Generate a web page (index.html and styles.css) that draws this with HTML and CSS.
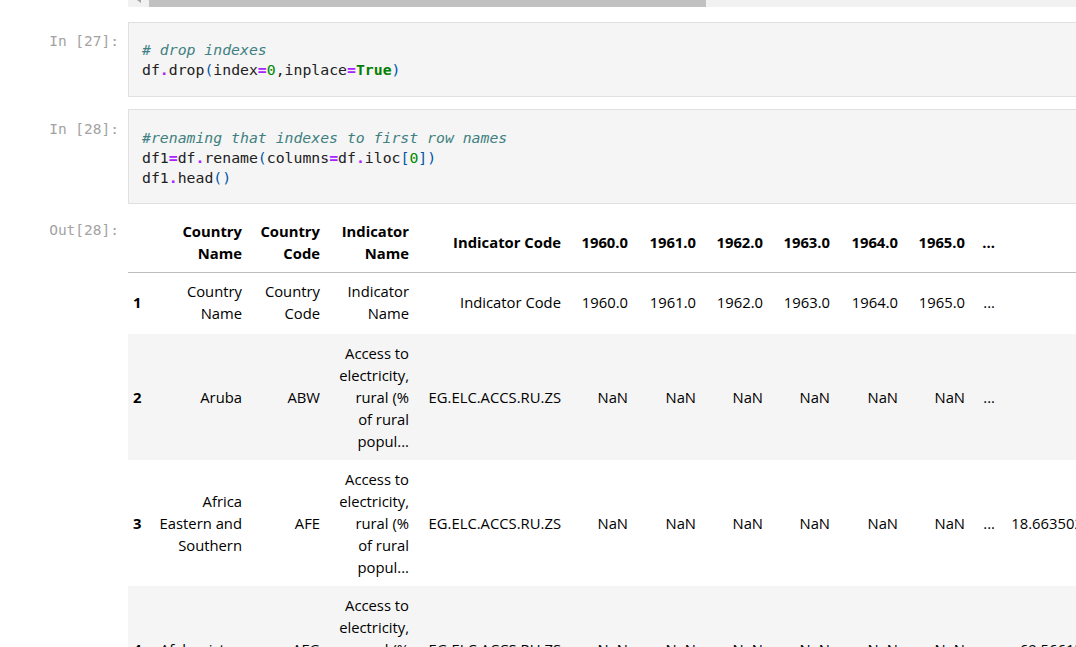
FILE: index.html
```html
<!DOCTYPE html>
<html lang="en">
<head>
<meta charset="utf-8">
<title>Notebook</title>
<link rel="stylesheet" href="styles.css">
</head>
<body>
<div class="nb">
  <div class="hscroll">
    <div class="hs-arrow"><svg width="6" height="4" viewBox="0 0 6 4"><path d="M1 0 L5 0 L5 3 Z" fill="#a3a3a3"/></svg></div>
    <div class="hs-thumb"></div>
  </div>

  <div class="cell c27">
    <div class="prompt">In&nbsp;[27]:</div>
    <div class="input"><pre class="code"><span class="cm"># drop indexes</span>
df<span class="op">.</span>drop<span class="br">(</span>index<span class="op">=</span><span class="nu">0</span>,inplace<span class="op">=</span><span class="kw">True</span><span class="br">)</span></pre></div>
  </div>

  <div class="cell c28">
    <div class="prompt">In&nbsp;[28]:</div>
    <div class="input"><pre class="code"><span class="cm">#renaming that indexes to first row names</span>
df1<span class="op">=</span>df<span class="op">.</span>rename<span class="br">(</span>columns<span class="op">=</span>df<span class="op">.</span>iloc<span class="br">[</span><span class="nu">0</span><span class="br">])</span>
df1<span class="op">.</span>head<span class="br">()</span></pre></div>
  </div>

  <div class="cell out">
    <div class="prompt">Out[28]:</div>
    <div class="output">
      <table class="df">
        <colgroup>
          <col class="w-idx"><col class="w-cname"><col class="w-ccode"><col class="w-iname"><col class="w-icode">
          <col class="w-y67"><col class="w-y68"><col class="w-y67"><col class="w-y67"><col class="w-y68"><col class="w-y67">
          <col class="w-dots"><col class="w-last"><col class="w-more"><col class="w-more"><col class="w-more">
        </colgroup>
        <thead>
          <tr>
            <th></th><th>Country<br>Name</th><th>Country<br>Code</th><th>Indicator<br>Name</th><th>Indicator Code</th>
            <th>1960.0</th><th>1961.0</th><th>1962.0</th><th>1963.0</th><th>1964.0</th><th>1965.0</th>
            <th>...</th><th>2017.0</th><th>2018.0</th><th>2019.0</th><th>2020.0</th>
          </tr>
        </thead>
        <tbody>
          <tr class="first">
            <th class="idx">1</th><td>Country<br>Name</td><td>Country<br>Code</td><td>Indicator<br>Name</td><td>Indicator Code</td>
            <td>1960.0</td><td>1961.0</td><td>1962.0</td><td>1963.0</td><td>1964.0</td><td>1965.0</td>
            <td>...</td><td>2017.0</td><td>2018.0</td><td>2019.0</td><td>2020.0</td>
          </tr>
          <tr>
            <th class="idx">2</th><td>Aruba</td><td>ABW</td><td>Access to<br>electricity,<br>rural (%<br>of rural<br>popul...</td><td>EG.ELC.ACCS.RU.ZS</td>
            <td>NaN</td><td>NaN</td><td>NaN</td><td>NaN</td><td>NaN</td><td>NaN</td>
            <td>...</td><td>100.0</td><td>100.0</td><td>100.0</td><td>NaN</td>
          </tr>
          <tr>
            <th class="idx">3</th><td>Africa<br>Eastern and<br>Southern</td><td>AFE</td><td>Access to<br>electricity,<br>rural (%<br>of rural<br>popul...</td><td>EG.ELC.ACCS.RU.ZS</td>
            <td>NaN</td><td>NaN</td><td>NaN</td><td>NaN</td><td>NaN</td><td>NaN</td>
            <td>...</td><td>18.663502014160156</td><td>20.0472347736358</td><td>22.19023</td><td>NaN</td>
          </tr>
          <tr>
            <th class="idx">4</th><td>Afghanistan</td><td>AFG</td><td>Access to<br>electricity,<br>rural (%<br>of rural<br>popul...</td><td>EG.ELC.ACCS.RU.ZS</td>
            <td>NaN</td><td>NaN</td><td>NaN</td><td>NaN</td><td>NaN</td><td>NaN</td>
            <td>...</td><td>69.56613159179688</td><td>94.7</td><td>97.7</td><td>NaN</td>
          </tr>
        </tbody>
      </table>
    </div>
  </div>
</div>
</body>
</html>
```
FILE: styles.css
```css
html, body {
  margin: 0;
  padding: 0;
  background: #ffffff;
  overflow: hidden;
}

.nb {
  width: 1110px;
}

/* horizontal scrollbar of the previous output */
.hscroll {
  margin-left: 128px;
  height: 7px;
  background: #f1f1f1;
  display: flex;
}
.hs-arrow {
  width: 21px;
  flex: none;
  display: flex;
  justify-content: center;
  align-items: flex-start;
}
.hs-arrow svg {
  display: block;
}
.hs-thumb {
  width: 557px;
  flex: none;
  background: #c1c1c1;
}

.cell {
  display: flex;
  align-items: flex-start;
}
.c27 { margin-top: 15px; }
.c28 { margin-top: 12px; }
.out { margin-top: 8px; }

.prompt {
  width: 128px;
  flex: none;
  box-sizing: border-box;
  padding: 9px 9px 0 0;
  text-align: right;
  font-family: "DejaVu Sans Mono", "Liberation Mono", monospace;
  font-size: 14.5px;
  line-height: 20px;
  color: #a3a3a3;
  white-space: nowrap;
}
.c28 .prompt { padding-top: 10px; }
.out .prompt { padding-top: 8px; }

.input {
  flex: 1;
  background: #f5f5f5;
  border: 1px solid #e0e0e0;
  padding: 17px 13px 16px;
}
.c28 .input {
  padding-top: 18px;
  padding-bottom: 15px;
}

.code {
  margin: 0;
  font-family: "DejaVu Sans Mono", "Liberation Mono", monospace;
  font-size: 14.8px;
  line-height: 20px;
  color: #212121;
}
.cm { color: #408080; font-style: italic; }
.op { color: #aa22ff; font-weight: bold; }
.nu { color: #008800; }
.kw { color: #008000; font-weight: bold; }
.br { color: #0055aa; }

.output {
  flex: 1;
  overflow: hidden;
}

.df {
  border-collapse: collapse;
  border-spacing: 0;
  table-layout: fixed;
  width: 1399px;
  font-family: "Open Sans", "Noto Sans", sans-serif;
  font-size: 14.8px;
  color: #000000;
}
.w-idx { width: 23px; }
.w-cname { width: 99px; }
.w-ccode { width: 78px; }
.w-iname { width: 89px; }
.w-icode { width: 152px; }
.w-y67 { width: 67px; }
.w-y68 { width: 68px; }
.w-dots { width: 30px; }
.w-last { width: 164px; }
.w-more { width: 120px; }

.df th,
.df td {
  padding: 8px;
  text-align: right;
  vertical-align: middle;
  line-height: 22px;
  white-space: nowrap;
  overflow: visible;
}
.df thead th {
  font-weight: bold;
  border-bottom: 1px solid #bdbdbd;
}
.df tbody td {
  font-weight: normal;
}
.df tbody tr.first th,
.df tbody tr.first td {
  padding-top: 7px;
  padding-bottom: 10px;
}
.df tbody th.idx {
  font-weight: bold;
  text-align: left;
  padding-left: 5px;
}
.df tbody tr:nth-child(even) {
  background: #f5f5f5;
}
```
